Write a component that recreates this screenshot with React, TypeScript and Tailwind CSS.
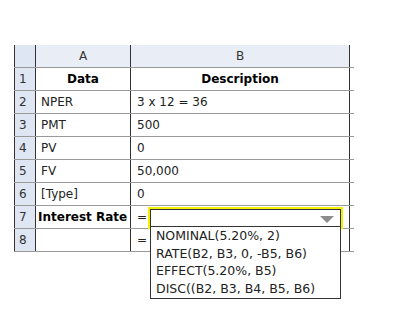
import React from "react";

const rows: { n: string; a: string; b: string; boldA?: boolean; boldB?: boolean; centerA?: boolean; centerB?: boolean }[] = [
  { n: "1", a: "Data", b: "Description", boldA: true, boldB: true, centerA: true, centerB: true },
  { n: "2", a: "NPER", b: "3 x 12 = 36" },
  { n: "3", a: "PMT", b: "500" },
  { n: "4", a: "PV", b: "0" },
  { n: "5", a: "FV", b: "50,000" },
  { n: "6", a: "[Type]", b: "0" },
  { n: "7", a: "Interest Rate", b: "=", boldA: true },
  { n: "8", a: "", b: "=" },
];

export default function App() {
  return (
    <div
      className="relative w-[394px] h-[316px] bg-white text-[12px] text-[#222]"
      style={{ fontFamily: '"DejaVu Sans", Verdana, sans-serif' }}
    >
      <div className="pt-[45px] pl-[14px]">
        <div className="flex h-[23px] border-b border-[#9a9a9a] w-[340px]">
          <div className="w-[21px] border-l border-[#333] bg-[#dde6f2]" />
          <div className="w-[95px] border-l border-[#333] bg-[#e9edf5] flex items-center justify-center text-[#333]">A</div>
          <div className="w-[220px] border-l border-r border-[#333] bg-[#e9edf5] flex items-center justify-center text-[#333]">B</div>
        </div>
        {rows.map((r) => (
          <div key={r.n} className="flex h-[23px] border-b border-[#9a9a9a] w-[340px]">
            <div className="w-[21px] border-l border-[#333] bg-[#dde6f2] flex items-center pl-[4px] text-[#333]">{r.n}</div>
            <div
              className={`w-[95px] border-l border-[#333] flex items-center whitespace-nowrap ${r.centerA ? "justify-center" : r.boldA ? "pl-[2px]" : "pl-[5px]"} ${r.boldA ? "font-bold text-black" : ""}`}
            >
              {r.a}
            </div>
            <div
              className={`w-[220px] border-l border-r border-[#333] flex items-center ${r.centerB ? "justify-center" : "pl-[6px]"} ${r.boldB ? "font-bold text-black" : ""}`}
            >
              {r.b}
            </div>
          </div>
        ))}
      </div>

      <div className="absolute left-[148px] top-[207px] w-[195px] h-[22px] border-2 border-[#f2ef00] bg-white">
        <div className="h-full border border-[#333] border-b-0 relative">
          <svg className="absolute right-[6px] top-[6px]" width="14" height="7" viewBox="0 0 14 7">
            <polygon points="0,0 14,0 7,7" fill="#8c8c8c" />
          </svg>
        </div>
      </div>
      <div className="absolute left-[150px] top-[226px] w-[191px] h-[73px] border border-[#333] bg-white pl-[5px] text-[12.5px] leading-[17.5px] text-[#222]">
        <div>NOMINAL(5.20%, 2)</div>
        <div>RATE(B2, B3, 0, -B5, B6)</div>
        <div>EFFECT(5.20%, B5)</div>
        <div>DISC((B2, B3, B4, B5, B6)</div>
      </div>
    </div>
  );
}
